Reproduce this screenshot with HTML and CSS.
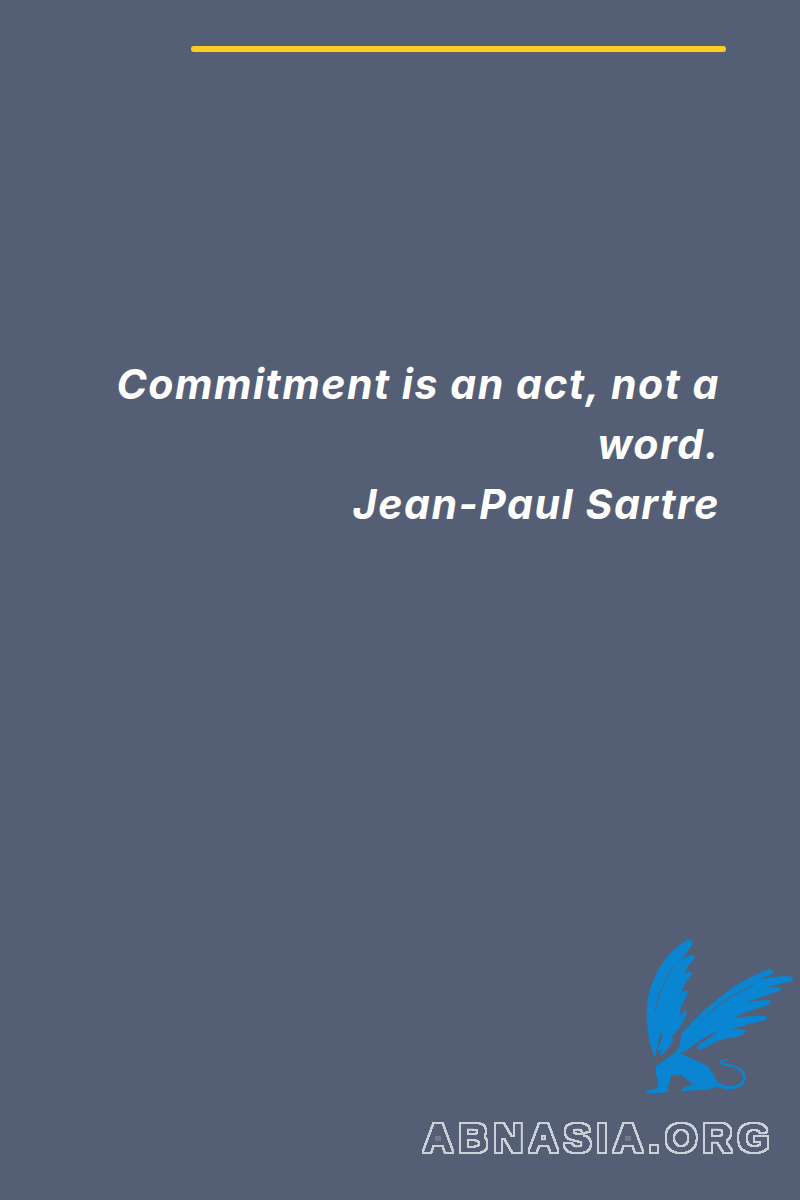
FILE: index.html
```html
<!DOCTYPE html>
<html lang="en">
<head>
<meta charset="utf-8">
<title>Commitment is an act, not a word.</title>
<link rel="stylesheet" href="styles.css">
</head>
<body>
<main class="poster">
  <div class="rule"></div>
  <blockquote class="quote">
    <p class="quote-line">Commitment is an act, not a word.</p>
    <p class="quote-line">Jean-Paul Sartre</p>
  </blockquote>
  <footer class="brand">
    <svg class="griffin" viewBox="0 0 510 510" aria-hidden="true">
      <path class="griffin-fill" d="M170 30C180 25 192 35 186 47C176 60 165 72 158 88C168 82 182 72 192 76C198 84 186 96 176 106L162 130C170 128 180 122 186 128C184 140 172 150 164 160L155 188C160 186 170 178 174 184C172 200 160 215 152 232L150 262C155 245 165 238 170 245C170 262 155 280 148 296L130 310L110 300L95 300C85 330 80 360 75 385C60 350 50 300 50 250C50 170 90 100 130 60Z"/>
      <path class="griffin-fill" d="M155 310C200 260 260 205 320 165C350 147 390 125 420 118C432 118 432 128 425 132C410 138 400 142 390 148C420 142 460 136 485 140C495 144 490 154 480 155C455 160 430 166 410 172C425 172 445 170 453 175C455 184 440 186 430 190C400 200 375 205 350 218C370 214 405 206 422 212C425 222 410 228 395 232C370 240 340 245 310 265C340 260 390 254 410 260C414 270 400 274 385 276C360 280 330 290 300 300C315 298 340 296 346 303C346 315 325 320 310 322C285 326 265 330 250 340C235 350 220 358 205 360C198 355 205 345 212 340C225 332 245 320 262 305C240 310 210 330 185 350C170 362 150 370 135 375L150 345Z"/>
      <path class="griffin-fill" d="M88 293C95 298 105 300 112 296C122 296 135 300 140 310C128 308 125 315 128 322C130 335 120 350 105 365C100 372 92 380 90 378C88 372 92 368 98 358C90 362 85 365 82 360C88 345 95 330 98 315C93 308 90 300 88 293Z"/>
      <path class="griffin-fill" d="M75 410L140 365L160 375C180 385 210 395 235 410C245 420 250 440 265 458C290 472 320 472 335 455C345 440 335 420 310 412C290 408 270 405 268 395C272 390 285 385 300 388C290 392 280 392 276 397C285 403 315 405 335 418C352 432 350 455 335 468C315 480 285 480 260 470L235 478L160 484C152 482 155 476 170 470L190 462C178 455 165 445 155 435C145 440 130 430 125 435C120 445 118 465 112 478L115 485C95 490 65 492 48 488C50 480 65 476 80 476C85 470 85 455 80 440C78 430 78 418 75 410Z"/>
      <path class="griffin-slit" d="M132 108C105 150 85 195 76 240"/>
      <path class="griffin-slit" d="M372 165C310 190 255 230 210 275"/>
    </svg>
    <svg class="wordmark" viewBox="0 0 375 44" role="img" aria-label="ABNASIA.ORG">
      <defs>
        <filter id="ring" x="-5%" y="-30%" width="110%" height="160%" color-interpolation-filters="sRGB">
          <feMorphology in="SourceAlpha" operator="dilate" radius="2" result="outer"/>
          <feGaussianBlur in="outer" stdDeviation="0.7" result="soft"/>
          <feComponentTransfer in="soft" result="rounded">
            <feFuncA type="linear" slope="6" intercept="-2.5"/>
          </feComponentTransfer>
          <feMorphology in="rounded" operator="erode" radius="1.5" result="inner"/>
          <feComposite in="rounded" in2="inner" operator="out" result="line"/>
          <feFlood flood-color="#cdd0d6"/>
          <feComposite in2="line" operator="in"/>
        </filter>
      </defs>
      <text class="wordmark-text" x="12" y="35" textLength="352" lengthAdjust="spacingAndGlyphs">ABNASIA.ORG</text>
    </svg>
  </footer>
</main>
</body>
</html>
```
FILE: styles.css
```css
* { box-sizing: border-box; }
html, body { margin: 0; padding: 0; }
body { background: #545f75; }
.poster {
  width: 800px;
  height: 1200px;
  display: flex;
  flex-direction: column;
  padding-top: 46px;
  overflow: hidden;
}
.rule {
  width: 535px;
  height: 6px;
  margin-left: 191px;
  border-radius: 3px;
  background: #ffcd1f;
}
.quote {
  margin: 302px 80px 0 100px;
  text-align: right;
  font-family: "Inter", "Open Sans", sans-serif;
  font-weight: 700;
  font-style: italic;
  font-size: 41px;
  letter-spacing: 1.55px;
  line-height: 60px;
  color: #ffffff;
}
.quote-line { margin: 0; }
.brand {
  margin-top: auto;
  display: flex;
  flex-direction: column;
  align-items: flex-end;
  padding-bottom: 39px;
}
.griffin { width: 170px; height: 170px; display: block; margin-bottom: 17px; }
.griffin-fill { fill: #0a85d1; }
.griffin-slit { fill: none; stroke: #545f75; stroke-width: 3; stroke-linecap: round; }
.wordmark { width: 375px; height: 44px; display: block; margin-right: 14px; }
.wordmark-text {
  font-family: "Liberation Sans", Arial, sans-serif;
  font-weight: 700;
  font-size: 41px;
  letter-spacing: 5px;
  fill: #cdd0d6;
  filter: url(#ring);
}
```
